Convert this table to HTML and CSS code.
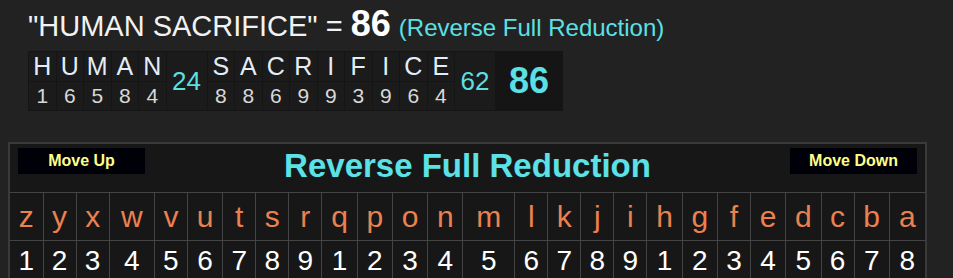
FILE: index.html
```html
<!DOCTYPE html>
<html>
<head>
<meta charset="utf-8">
<link rel="stylesheet" href="styles.css">
</head>
<body>
<div class="summary">
  <div class="phrase"><span class="ptext">"HUMAN SACRIFICE" = </span><span class="pval">86</span> <span class="pcipher">(Reverse Full Reduction)</span></div>
  <table class="words">
    <tr>
      <td class="wl">H</td><td class="wl">U</td><td class="wl">M</td><td class="wl">A</td><td class="wl">N</td>
      <td class="wsum" rowspan="2">24</td>
      <td class="wl">S</td><td class="wl">A</td><td class="wl">C</td><td class="wl">R</td><td class="wl">I</td><td class="wl">F</td><td class="wl">I</td><td class="wl">C</td><td class="wl">E</td>
      <td class="wsum" rowspan="2">62</td>
      <td class="wtotal" rowspan="2">86</td>
    </tr>
    <tr>
      <td class="wn">1</td><td class="wn">6</td><td class="wn">5</td><td class="wn">8</td><td class="wn">4</td>
      <td class="wn">8</td><td class="wn">8</td><td class="wn">6</td><td class="wn">9</td><td class="wn">9</td><td class="wn">3</td><td class="wn">9</td><td class="wn">6</td><td class="wn">4</td>
    </tr>
  </table>
</div>
<table class="chart">
  <tr>
    <td class="chead" colspan="26">
      <div class="headbar">
        <button class="mbtn">Move Up</button>
        <div class="ctitle">Reverse Full Reduction</div>
        <button class="mbtn">Move Down</button>
      </div>
    </td>
  </tr>
  <tr class="letters">
    <td>z</td><td>y</td><td>x</td><td>w</td><td>v</td><td>u</td><td>t</td><td>s</td><td>r</td><td>q</td><td>p</td><td>o</td><td>n</td><td>m</td><td>l</td><td>k</td><td>j</td><td>i</td><td>h</td><td>g</td><td>f</td><td>e</td><td>d</td><td>c</td><td>b</td><td>a</td>
  </tr>
  <tr class="nums">
    <td>1</td><td>2</td><td>3</td><td>4</td><td>5</td><td>6</td><td>7</td><td>8</td><td>9</td><td>1</td><td>2</td><td>3</td><td>4</td><td>5</td><td>6</td><td>7</td><td>8</td><td>9</td><td>1</td><td>2</td><td>3</td><td>4</td><td>5</td><td>6</td><td>7</td><td>8</td>
  </tr>
</table>
</body>
</html>
```
FILE: styles.css
```css
html, body {
  margin: 0;
  padding: 0;
}
body {
  background: #222222;
  font-family: "Liberation Sans", Arial, sans-serif;
  padding: 8px;
}
.summary {
  padding-left: 20px;
}
.phrase {
  color: #f2f2f2;
  font-size: 29px;
  line-height: 32px;
  margin-top: 0;
  white-space: nowrap;
}
.pval {
  font-weight: bold;
  font-size: 36px;
  color: #ffffff;
}
.pcipher {
  font-size: 24px;
  color: #5ce0e6;
}
.words {
  border-collapse: collapse;
  table-layout: fixed;
  margin-top: 7px;
  background: #1b1b1b;
}
.words td {
  border: 1px solid #151515;
  text-align: center;
  padding: 0;
  overflow: visible;
}
.wl {
  width: 26.5px;
  height: 28px;
  font-size: 25px;
  color: #e4ecf6;
}
.wn {
  height: 28px;
  font-size: 21px;
  color: #d8d8d8;
}
.wsum {
  width: 40px;
  font-size: 26px;
  color: #5cdfe0;
}
.wtotal {
  width: 66px;
  font-size: 36px;
  font-weight: bold;
  color: #5ce0e6;
  background: #151515;
}
.chart {
  margin-top: 31px;
  width: 919px;
  border-collapse: collapse;
  background: #171717;
  border: 2px solid #3a3a3a;
}
.chart td {
  border: 1px solid #444444;
  text-align: center;
  padding: 0;
}
.chead {
  height: 48px;
  padding: 0;
}
.headbar {
  display: flex;
  align-items: flex-start;
  padding: 4px 8px 0 8px;
  height: 44px;
}
.mbtn {
  width: 127px;
  height: 26px;
  background: #000008;
  border: none;
  color: #ffff88;
  font-family: "Liberation Sans", Arial, sans-serif;
  font-weight: bold;
  font-size: 16px;
  padding: 0;
}
.ctitle {
  flex: 1;
  text-align: center;
  font-size: 33px;
  font-weight: bold;
  color: #5ce1e6;
  line-height: 36px;
  padding-top: 0;
}
.letters td {
  height: 47px;
  font-size: 30px;
  color: #ec8150;
}
.nums td {
  height: 39px;
  font-size: 28px;
  color: #ffffff;
}
```
